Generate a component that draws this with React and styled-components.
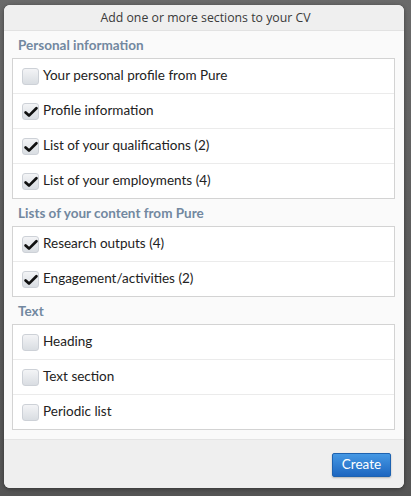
import React from 'react';
import styled, { createGlobalStyle } from 'styled-components';

const GlobalStyle = createGlobalStyle`
	html, body {
		margin: 0;
		padding: 0;
		height: 100%;
	}
	body {
		background: linear-gradient(#6a6a6a 0%, #5c5c5c 50%, #555 100%);
		font-family: Lato, "Noto Sans", sans-serif;
	}
`;

const Page = styled.div`
	padding: 5px 7px 8px 4px;
	height: 496px;
	box-sizing: border-box;
`;

const Dialog = styled.div`
	width: 400px;
	height: 483px;
	display: flex;
	flex-direction: column;
	background: #fafafa;
	border-radius: 6px;
	overflow: hidden;
	box-shadow: 0 1px 4px rgba(0, 0, 0, 0.4);
`;

const Header = styled.div`
	height: 25px;
	flex: none;
	display: flex;
	align-items: center;
	justify-content: center;
	padding-left: 3px;
	background: #efefef;
	border-bottom: 1px solid #e2e2e2;
	color: #3a3a3a;
	font-family: "Open Sans", sans-serif;
	font-size: 12.3px;
`;

const Content = styled.div`
	flex: 1;
	padding: 0 9px 0 8px;
`;

const SectionTitle = styled.div`
	height: 27px;
	box-sizing: border-box;
	display: flex;
	align-items: center;
	padding: 1px 0 0 6px;
	color: #7288a0;
	font-weight: 700;
	font-size: 13.5px;
`;

const List = styled.div`
	border: 1px solid #d3d3d3;
	background: #fff;
`;

const Row = styled.label`
	height: 34px;
	display: flex;
	align-items: center;
	gap: 4px;
	padding-left: 9px;
	font-size: 13.5px;
	color: #222;
	border-top: ${({ first }) => (first ? 'none' : '1px solid #ebebeb')};
`;

const Label = styled.span`
	margin-top: -3px;
`;

const Box = styled.span`
	width: 17px;
	height: 17px;
	flex: none;
	box-sizing: border-box;
	border: 1px solid #cdd1d7;
	border-radius: 3px;
	background: linear-gradient(#f3f4f6, #d9dde2);
	display: flex;
	align-items: center;
	justify-content: center;
	margin-top: 1px;
`;

const Footer = styled.div`
	height: 48px;
	flex: none;
	display: flex;
	align-items: center;
	justify-content: flex-end;
	padding-right: 13px;
	background: #efefef;
	border-top: 1px solid #e4e4e4;
`;

const CreateButton = styled.button`
	height: 24px;
	width: 59px;
	border: 1px solid #1d62b0;
	border-radius: 2px;
	background: linear-gradient(#4598e4, #1d66c0);
	color: #fff;
	font-family: inherit;
	font-size: 13.5px;
	box-shadow: 0 1px 2px rgba(0, 0, 0, 0.25);
	padding: 0 0 2px;
	margin-top: 2px;
`;

const Check = () => (
	<svg width="14" height="12" viewBox="0 0 14 12">
		<path d="M1.6 6.4 L5 9.6 L12.4 2.2" fill="none" stroke="#111" strokeWidth="2.7" strokeLinecap="round" strokeLinejoin="round" />
	</svg>
);

const sections = [
	{
		title: 'Personal information',
		items: [
			{ label: 'Your personal profile from Pure', checked: false },
			{ label: 'Profile information', checked: true },
			{ label: 'List of your qualifications (2)', checked: true },
			{ label: 'List of your employments (4)', checked: true },
		],
	},
	{
		title: 'Lists of your content from Pure',
		items: [
			{ label: 'Research outputs (4)', checked: true },
			{ label: 'Engagement/activities (2)', checked: true },
		],
	},
	{
		title: 'Text',
		items: [
			{ label: 'Heading', checked: false },
			{ label: 'Text section', checked: false },
			{ label: 'Periodic list', checked: false },
		],
	},
];

const App = () => (
	<Page>
		<GlobalStyle />
		<Dialog>
			<Header>Add one or more sections to your CV</Header>
			<Content>
				{sections.map(section => (
					<div key={section.title}>
						<SectionTitle>{section.title}</SectionTitle>
						<List>
							{section.items.map((item, index) => (
								<Row key={item.label} first={index === 0}>
									<Box>{item.checked && <Check />}</Box>
									<Label>{item.label}</Label>
								</Row>
							))}
						</List>
					</div>
				))}
			</Content>
			<Footer>
				<CreateButton>Create</CreateButton>
			</Footer>
		</Dialog>
	</Page>
);

export default App;
